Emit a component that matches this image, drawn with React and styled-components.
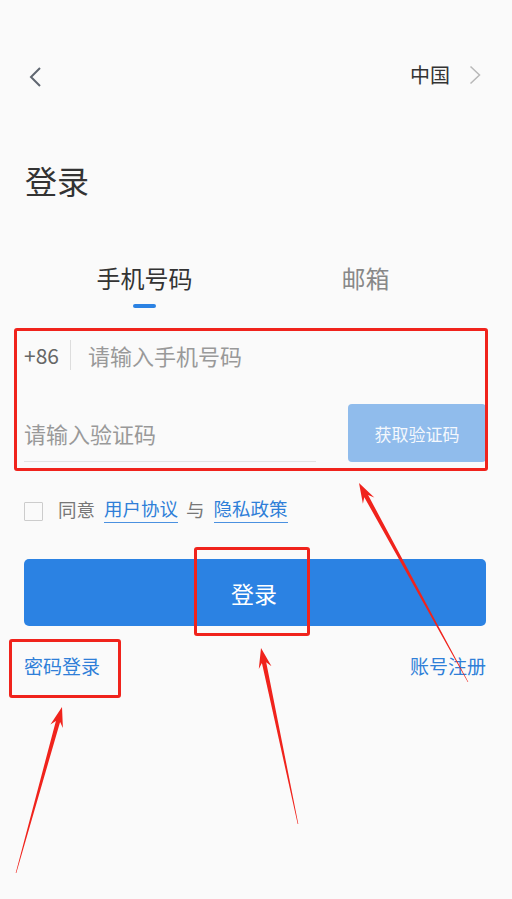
import React from "react";
import styled, { createGlobalStyle } from "styled-components";

const GlobalStyle = createGlobalStyle`
  html, body {
    margin: 0;
    padding: 0;
    background: #fafafa;
  }
  body {
    font-family: "Noto Sans CJK SC", "Noto Sans", "Liberation Sans", sans-serif;
    color: #333;
  }
`;

const Page = styled.div`
  position: relative;
  width: 512px;
  height: 899px;
  overflow: hidden;
  background: #fafafa;
  padding: 56px 26px 0 24px;
  box-sizing: border-box;
`;

const TopBar = styled.div`
  display: flex;
  align-items: center;
  justify-content: space-between;
  height: 42px;
`;

const BackButton = styled.div`
  display: flex;
  align-items: center;
  padding-left: 4px;
`;

const Region = styled.div`
  display: flex;
  align-items: center;
  gap: 19px;
  padding-right: 5px;
  margin-top: -4px;
  font-size: 20px;
  color: #333;
  line-height: 1;
`;

const Title = styled.h1`
  margin: 60px 0 0 1px;
  font-size: 32px;
  font-weight: 400;
  line-height: 44px;
  color: #333;
`;

const Tabs = styled.div`
  display: grid;
  grid-template-columns: 1fr 1fr;
  margin: 60px 10px 0 10px;
`;

const Tab = styled.div`
  display: flex;
  flex-direction: column;
  align-items: center;
  font-size: 24px;
  line-height: 32px;
  color: ${(p) => (p.$active ? "#333" : "#888")};

  &::after {
    content: "";
    display: block;
    width: 23px;
    height: 4px;
    margin-top: 10px;
    border-radius: 2px;
    background: ${(p) => (p.$active ? "#2b82e3" : "transparent")};
  }
`;

const PhoneRow = styled.div`
  display: flex;
  align-items: center;
  height: 50px;
  margin-top: 22px;
`;

const Prefix = styled.span`
  font-size: 21px;
  color: #666;
  padding-right: 11px;
  border-right: 1px solid #ddd;
  line-height: 30px;
`;

const Placeholder = styled.span`
  font-size: 22px;
  color: #999;
  margin-left: ${(p) => p.$indent || 0}px;
`;

const CodeRow = styled.div`
  display: flex;
  align-items: stretch;
  gap: 32px;
  height: 58px;
  margin-top: 24px;
`;

const CodeField = styled.div`
  flex: 1;
  display: flex;
  align-items: center;
  padding-top: 1px;
  border-bottom: 1px solid #e2e2e2;
`;

const SendButton = styled.div`
  width: 138px;
  display: flex;
  align-items: center;
  justify-content: center;
  background: #90bcec;
  border-radius: 4px;
  color: #f4f8fd;
  font-size: 17px;
`;

const AgreeRow = styled.div`
  display: flex;
  align-items: center;
  height: 30px;
  margin-top: 32px;
  font-size: 18.5px;
  color: #777;
`;

const CheckBox = styled.span`
  width: 17px;
  height: 17px;
  border: 1px solid #ccc;
  border-radius: 1px;
  margin-right: 15px;
  margin-top: 4px;
`;

const Link = styled.span`
  color: #2f7fd8;
  border-bottom: ${(p) => (p.$underline ? "1px solid #4a90e0" : "none")};
  padding-bottom: ${(p) => (p.$underline ? "1px" : "0")};
  margin: 0 8px 0 9px;
`;

const LoginButton = styled.div`
  height: 67px;
  margin-top: 35px;
  display: flex;
  align-items: center;
  justify-content: center;
  background: #2b82e3;
  border-radius: 5px;
  color: #fff;
  font-size: 23px;
  padding-right: 2px;
`;

const BottomLinks = styled.div`
  display: flex;
  justify-content: space-between;
  margin-top: 27px;
  line-height: 26px;
  font-size: 19px;
  color: #2f7fd8;
`;

const Mark = styled.div`
  position: absolute;
  left: ${(p) => p.$x}px;
  top: ${(p) => p.$y}px;
  width: ${(p) => p.$w}px;
  height: ${(p) => p.$h}px;
  border: 3px solid #f0231c;
  border-radius: 3px;
  box-sizing: border-box;
  pointer-events: none;
`;

const Overlay = styled.svg`
  position: absolute;
  left: 0;
  top: 0;
  pointer-events: none;
`;

function arrowPoints(tail, tip) {
  const dx = tip[0] - tail[0];
  const dy = tip[1] - tail[1];
  const len = Math.hypot(dx, dy);
  const ux = dx / len;
  const uy = dy / len;
  const nx = -uy;
  const ny = ux;
  const head = 20;
  const base = [tip[0] - ux * head, tip[1] - uy * head];
  const notch = [tip[0] - ux * (head - 5), tip[1] - uy * (head - 5)];
  const pts = [
    [tail[0] + nx * 0.3, tail[1] + ny * 0.3],
    [notch[0] + nx * 2.2, notch[1] + ny * 2.2],
    [base[0] + nx * 6.5, base[1] + ny * 6.5],
    tip,
    [base[0] - nx * 6.5, base[1] - ny * 6.5],
    [notch[0] - nx * 2.2, notch[1] - ny * 2.2],
    [tail[0] - nx * 0.3, tail[1] - ny * 0.3],
  ];
  return pts.map((p) => p.map((v) => v.toFixed(1)).join(",")).join(" ");
}

const arrows = [
  { tail: [468, 682], tip: [359, 483] },
  { tail: [298, 824], tip: [261, 648] },
  { tail: [16, 873], tip: [62, 707] },
];

export default function App() {
  return (
    <>
      <GlobalStyle />
      <Page>
        <TopBar>
          <BackButton>
            <svg width="14" height="22" viewBox="0 0 14 22">
              <polyline
                points="12,2 3,11 12,20"
                fill="none"
                stroke="#5f6670"
                strokeWidth="2"
              />
            </svg>
          </BackButton>
          <Region>
            中国
            <svg width="12" height="20" viewBox="0 0 12 20">
              <polyline
                points="1.5,1.5 10.5,10 1.5,18.5"
                fill="none"
                stroke="#b8b8b8"
                strokeWidth="1.5"
              />
            </svg>
          </Region>
        </TopBar>

        <Title>登录</Title>

        <Tabs>
          <Tab $active>手机号码</Tab>
          <Tab>邮箱</Tab>
        </Tabs>

        <PhoneRow>
          <Prefix>+86</Prefix>
          <Placeholder $indent={17}>请输入手机号码</Placeholder>
        </PhoneRow>

        <CodeRow>
          <CodeField>
            <Placeholder>请输入验证码</Placeholder>
          </CodeField>
          <SendButton>获取验证码</SendButton>
        </CodeRow>

        <AgreeRow>
          <CheckBox />
          同意
          <Link $underline>用户协议</Link>与<Link $underline>隐私政策</Link>
        </AgreeRow>

        <LoginButton>登录</LoginButton>

        <BottomLinks>
          <span>密码登录</span>
          <span>账号注册</span>
        </BottomLinks>

        <Mark $x={14} $y={328} $w={474} $h={143} />
        <Mark $x={194} $y={547} $w={116} $h={89} />
        <Mark $x={9} $y={639} $w={112} $h={59} />

        <Overlay width="512" height="899" viewBox="0 0 512 899">
          {arrows.map((a, i) => (
            <polygon key={i} points={arrowPoints(a.tail, a.tip)} fill="#f0231c" />
          ))}
        </Overlay>
      </Page>
    </>
  );
}
